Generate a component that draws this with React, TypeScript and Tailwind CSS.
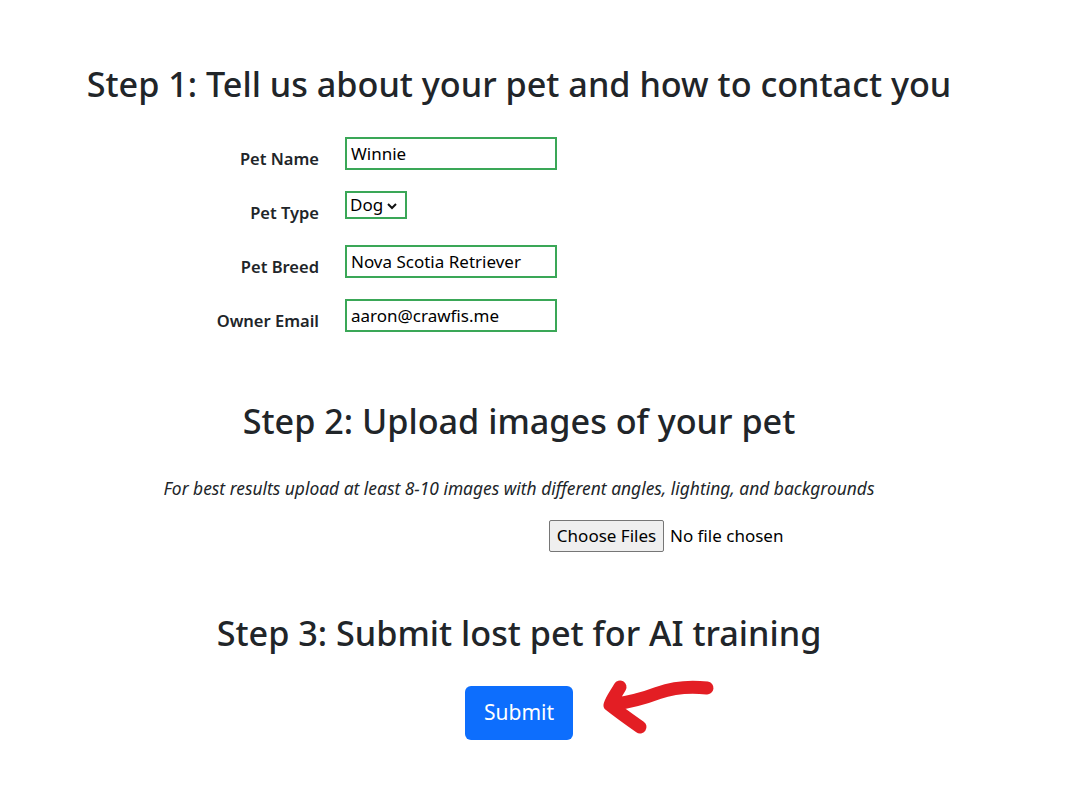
import React from "react";

const font = { fontFamily: '"Noto Sans", "Open Sans", sans-serif' };

function Row({ label, children }: { label: string; children: React.ReactNode }) {
  return (
    <div className="flex h-[33px] items-start">
      <div className="w-[319px] whitespace-nowrap pt-[10px] text-right text-[16.5px] font-semibold leading-[24px]">{label}</div>
      <div className="ml-[26px]">{children}</div>
    </div>
  );
}

function TextBox({ value }: { value: string }) {
  return (
    <div className="flex h-[33px] w-[212px] items-center border-2 border-[#3aa757] pl-[4px] text-[17px] leading-[20px] text-black">
      {value}
    </div>
  );
}

export default function App() {
  return (
    <div className="min-h-[808px] w-[1089px] bg-white text-[#212529]" style={font}>
      <div className="flex w-[1038px] flex-col items-center pt-[64px]">
        <h2 className="whitespace-nowrap text-[34.2px] font-medium leading-[40px]">Step 1: Tell us about your pet and how to contact you</h2>
      </div>
      <div className="mt-[33px] flex flex-col gap-[21px]">
        <Row label="Pet Name">
          <TextBox value="Winnie" />
        </Row>
        <Row label="Pet Type">
          <div className="flex h-[28px] w-[62px] items-center gap-[3px] border-2 border-[#3aa757] pl-[3px] text-[17px] text-black">
            <span>Dog</span>
            <svg width="12" height="12" viewBox="0 0 12 12" className="mt-[1px]">
              <path d="M2 4 L6 8 L10 4" fill="none" stroke="#111" strokeWidth="2" />
            </svg>
          </div>
        </Row>
        <Row label="Pet Breed">
          <TextBox value="Nova Scotia Retriever" />
        </Row>
        <Row label="Owner Email">
          <TextBox value="aaron@crawfis.me" />
        </Row>
      </div>
      <div className="mt-[69px] flex w-[1038px] flex-col items-center">
        <h2 className="whitespace-nowrap text-[34.2px] font-medium leading-[40px]">Step 2: Upload images of your pet</h2>
        <p className="mt-[35px] whitespace-nowrap text-[17.4px] italic leading-[24px]">
          For best results upload at least 8-10 images with different angles, lighting, and backgrounds
        </p>
      </div>
      <div className="mt-[20px] flex items-center pl-[549px] text-[17px] text-black">
        <div className="flex h-[32px] w-[115px] items-center justify-center rounded-[2px] border border-[#767676] bg-[#efefef]">
          Choose Files
        </div>
        <span className="ml-[6px]">No file chosen</span>
      </div>
      <div className="mt-[61px] flex w-[1038px] flex-col items-center">
        <h2 className="whitespace-nowrap text-[34.2px] font-medium leading-[40px]">Step 3: Submit lost pet for AI training</h2>
        <div className="relative mt-[33px]">
          <button className="flex h-[54px] w-[108px] items-center justify-center rounded-[6px] bg-[#0d6efd] text-[21px] text-white">
            Submit
          </button>
          <svg className="absolute left-[125px] top-[-10px]" width="130" height="70" viewBox="590 676 130 70">
            <path
              d="M707 688 C690 686 672 688 658 693 C645 698 630 702 611 705 M620 687 C616 694 612 699 610 705 C620 713 630 720 640 727"
              fill="none"
              stroke="#e31e24"
              strokeWidth="13"
              strokeLinecap="round"
              strokeLinejoin="round"
            />
          </svg>
        </div>
      </div>
    </div>
  );
}
